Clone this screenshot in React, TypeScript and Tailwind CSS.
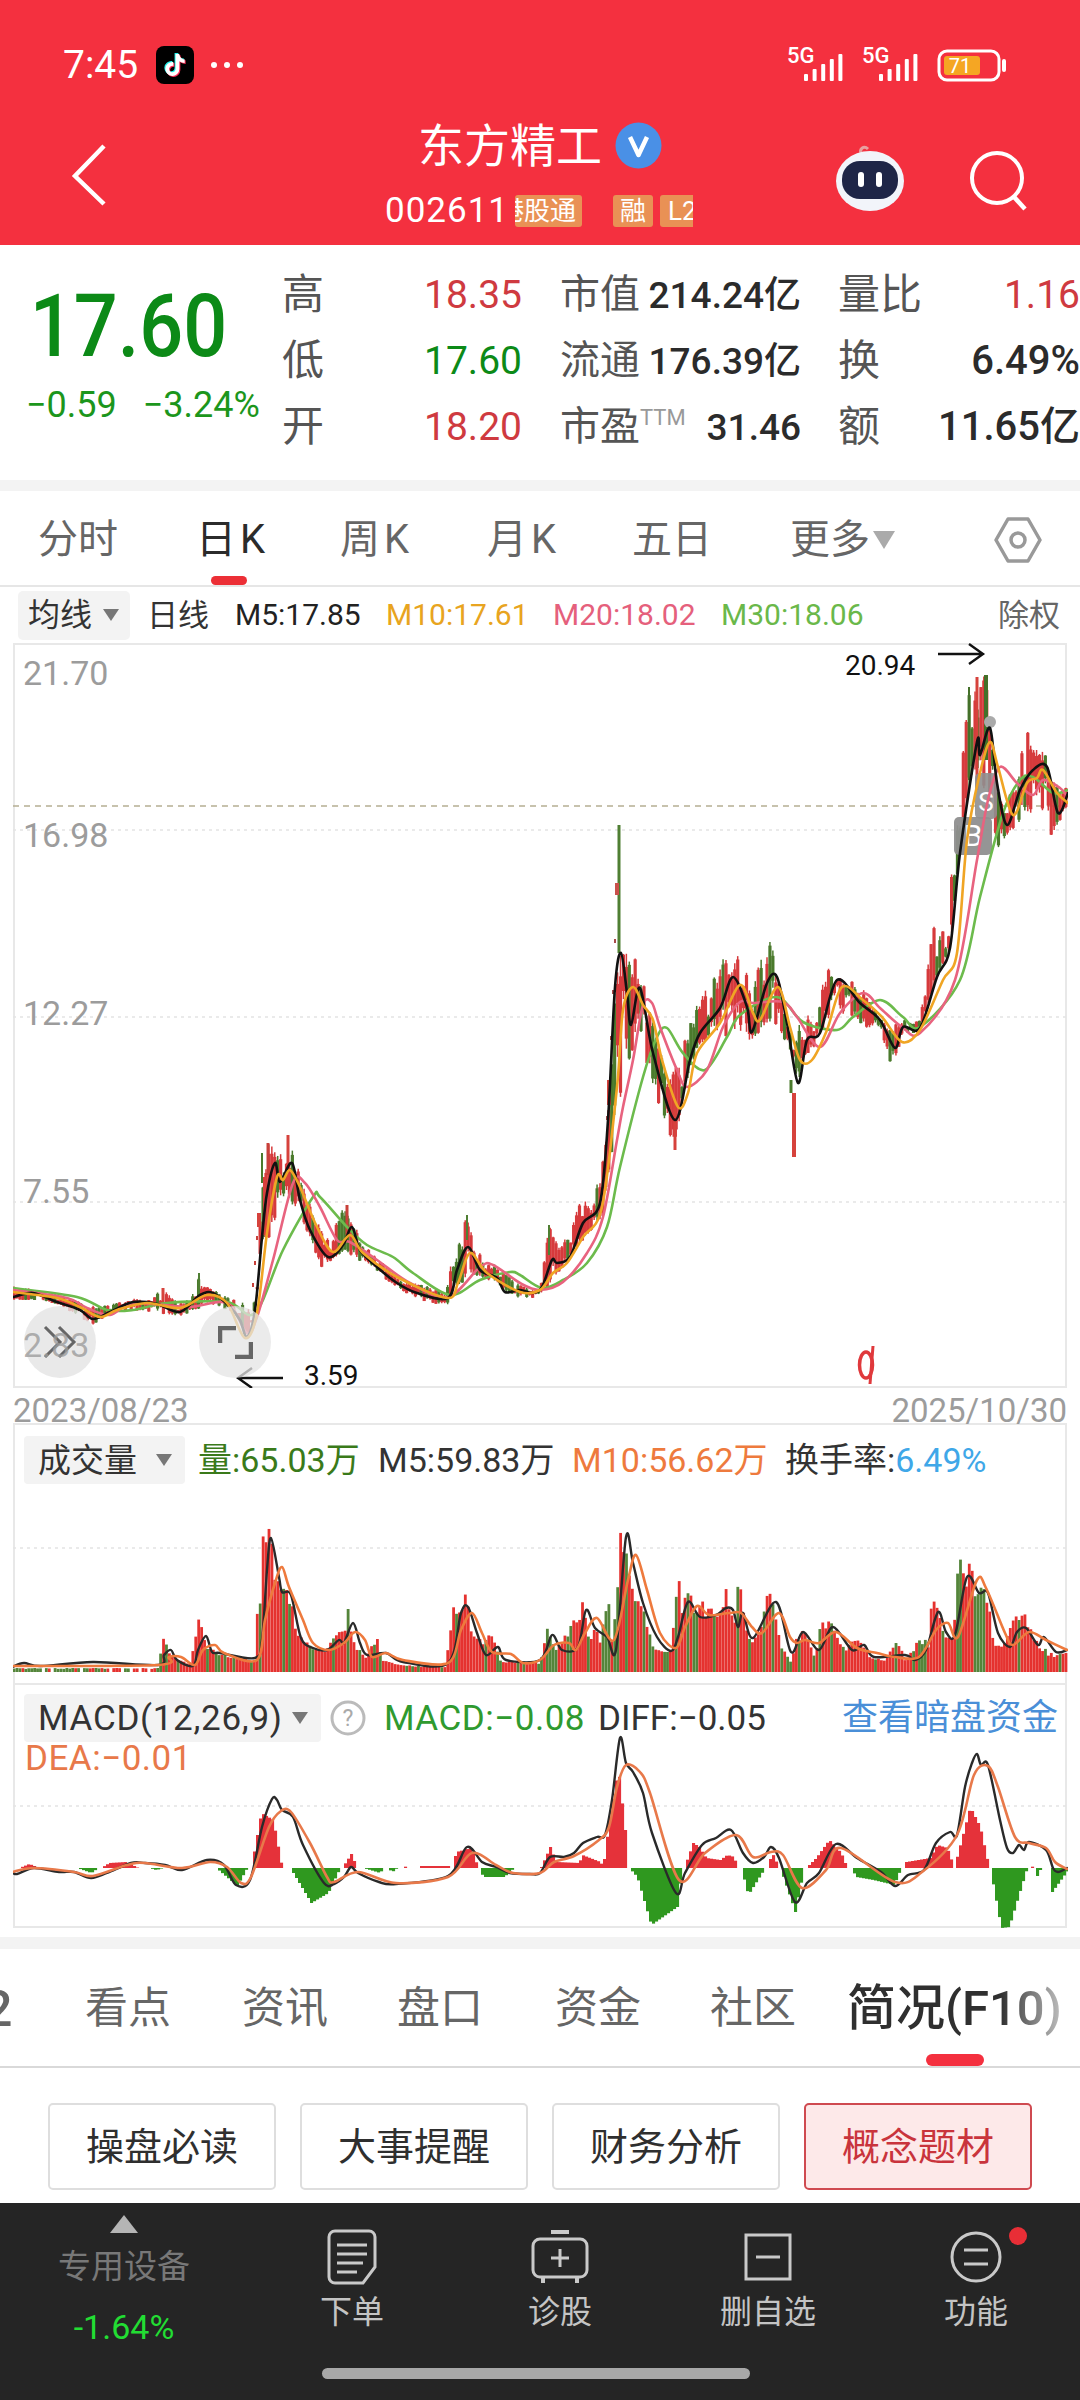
import React from "react";
import { FaTiktok } from "react-icons/fa";

type P = [number, number];
const sortP = (p: P[]) => [...p].sort((a, b) => a[0] - b[0]);
const at = (pts: P[], x: number) => {
  if (x <= pts[0][0]) return pts[0][1];
  for (let i = 1; i < pts.length; i++) {
    if (x <= pts[i][0]) {
      const [x0, y0] = pts[i - 1];
      const [x1, y1] = pts[i];
      return x1 === x0 ? y1 : y0 + ((y1 - y0) * (x - x0)) / (x1 - x0);
    }
  }
  return pts[pts.length - 1][1];
};
const smooth = (p: P[]) => {
  let d = `M${p[0][0]} ${p[0][1]}`;
  for (let i = 0; i < p.length - 1; i++) {
    const a = p[Math.max(0, i - 1)], b = p[i], c = p[i + 1], e = p[Math.min(p.length - 1, i + 2)];
    const k = 0.16;
    d += ` C${(b[0] + (c[0] - a[0]) * k).toFixed(1)} ${(b[1] + (c[1] - a[1]) * k).toFixed(1)} ${(c[0] - (e[0] - b[0]) * k).toFixed(1)} ${(c[1] - (e[1] - b[1]) * k).toFixed(1)} ${c[0]} ${c[1]}`;
  }
  return d;
};
const rnd = (i: number) => {
  const v = Math.sin(i * 12.9898 + 4.1) * 43758.5453;
  return v - Math.floor(v);
};

const M5: P[] = [[13,1297],[33,1293],[57,1302],[80,1310],[93,1319],[110,1312],[133,1302],[157,1304],[180,1312],[200,1295],[213,1293],[230,1307],[240,1320],[247,1337],[255,1310],[262,1237],[267,1193],[275,1163],[280,1182],[292,1163],[300,1200],[310,1230],[328,1257],[343,1245],[352,1227],[360,1250],[377,1267],[397,1283],[417,1293],[448,1298],[457,1270],[468,1247],[480,1270],[497,1278],[505,1292],[520,1290],[533,1293],[542,1287],[552,1260],[557,1263],[570,1257],[583,1223],[600,1203],[608,1120],[615,987],[621,953],[627,993],[631,1025],[640,988],[653,1053],[675,1120],[690,1060],[700,1033],[720,1008],[733,977],[747,1007],[752,1032],[767,983],[777,977],[787,1023],[798,1083],[807,1040],[820,1033],[837,980],[860,1003],[880,1020],[895,1048],[903,1027],[920,1028],[937,977],[950,948],[960,853],[977,742],[980,755],[990,728],[997,783],[1007,825],[1020,790],[1033,770],[1047,767],[1058,813],[1068,793]];
const M10: P[] = [[13,1292],[57,1298],[80,1307],[100,1317],[117,1310],[147,1303],[180,1308],[207,1295],[227,1303],[245,1338],[257,1313],[267,1233],[277,1177],[283,1180],[290,1170],[300,1187],[317,1227],[333,1252],[350,1235],[363,1253],[397,1277],[447,1298],[458,1283],[470,1253],[487,1273],[520,1292],[540,1290],[553,1273],[567,1263],[583,1237],[602,1207],[617,1087],[623,1010],[633,987],[643,1005],[653,1020],[662,1060],[678,1107],[688,1093],[697,1053],[720,1023],[740,985],[753,1013],[760,1020],[778,987],[790,1027],[800,1060],[812,1060],[827,1030],[842,987],[863,1000],[882,1017],[902,1042],[920,1030],[943,980],[957,953],[967,840],[980,773],[990,742],[998,767],[1013,815],[1027,783],[1037,778],[1043,770],[1057,793],[1068,803]];
const M20: P[] = [[13,1290],[67,1298],[87,1308],[110,1315],[133,1303],[187,1307],[227,1303],[247,1333],[257,1317],[273,1260],[293,1183],[305,1183],[320,1207],[337,1240],[350,1242],[377,1260],[410,1283],[448,1297],[480,1267],[493,1265],[520,1283],[540,1290],[563,1282],[587,1253],[603,1217],[617,1140],[623,1107],[633,1060],[643,1005],[652,1003],[660,1027],[677,1070],[687,1087],[707,1070],[723,1027],[740,1002],[753,1003],[783,1002],[797,1017],[820,1047],[840,1013],[863,993],[880,1008],[902,1027],[920,1033],[955,980],[977,860],[988,800],[1000,767],[1017,783],[1033,795],[1043,780],[1060,788],[1068,797]];
const M30: P[] = [[13,1288],[77,1297],[107,1310],[133,1310],[167,1303],[227,1302],[255,1313],[283,1250],[313,1197],[320,1197],[347,1227],[367,1245],[393,1257],[413,1273],[450,1295],[480,1280],[510,1272],[520,1275],[542,1288],[563,1280],[587,1263],[607,1227],[620,1167],[643,1077],[657,1037],[667,1028],[683,1053],[705,1070],[727,1037],[740,1015],[777,997],[803,1022],[837,1030],[853,1017],[880,1000],[903,1017],[920,1027],[960,980],[980,897],[1003,813],[1020,780],[1033,777],[1053,793],[1068,790]];
const HI: P[] = sortP([[13,1285],[60,1295],[90,1305],[110,1305],[125,1298],[150,1300],[162,1288],[175,1300],[190,1300],[199,1273],[210,1288],[230,1298],[250,1305],[258,1290],[262,1153],[268,1143],[275,1142],[283,1155],[288,1135],[295,1160],[310,1200],[325,1240],[345,1205],[352,1220],[365,1245],[400,1280],[445,1290],[452,1260],[467,1215],[475,1245],[500,1270],[530,1290],[540,1290],[549,1225],[560,1250],[582,1198],[595,1193],[605,1150],[612,1080],[621,953],[633,953],[641,973],[655,1030],[668,1080],[680,1060],[690,1017],[702,997],[727,950],[738,945],[752,990],[769,928],[775,960],[787,1027],[796,1040],[803,1007],[815,1027],[826,963],[837,977],[860,983],[887,1027],[898,1020],[920,1020],[935,917],[947,923],[960,777],[969,687],[977,677],[986,675],[993,767],[1002,823],[1017,738],[1027,730],[1038,747],[1043,743],[1052,783],[1067,777]]);
const LO: P[] = sortP([[13,1300],[40,1300],[60,1305],[80,1318],[93,1325],[105,1317],[125,1310],[150,1312],[180,1317],[195,1310],[215,1305],[232,1312],[250,1320],[262,1240],[270,1238],[280,1205],[290,1205],[300,1215],[310,1240],[322,1268],[335,1258],[345,1250],[355,1260],[365,1262],[385,1280],[400,1290],[420,1300],[447,1307],[455,1290],[470,1275],[480,1278],[500,1285],[520,1300],[540,1297],[553,1280],[580,1243],[603,1220],[612,1150],[625,1073],[640,1027],[650,1080],[675,1150],[687,1087],[697,1047],[720,1030],[745,1057],[755,1037],[773,1020],[788,1047],[800,1060],[815,1047],[827,1020],[853,1017],[875,1035],[893,1067],[903,1033],[920,1033],[932,980],[958,867],[970,773],[985,790],[1000,855],[1008,835],[1025,818],[1042,810],[1053,840],[1057,827],[1067,807]]);
const EXTRA: [number, number, number, string, number][] = [
  [253,1283,1287,"#c8403a",2],[255,1261,1265,"#c8403a",2],[257,1236,1240,"#c8403a",2],[259,1213,1227,"#d6423c",4],[265,1177,1235,"#d8403c",4],[262,1153,1183,"#4a7a2c",2],
  [619,825,953,"#4f7f33",3],[617,883,895,"#c9504a",4],[615,939,943,"#a84a4a",2],[613,990,994,"#a84a4a",2],[611,1036,1040,"#a84a4a",2],[609,1080,1105,"#d6423c",4],[607,1116,1120,"#a84a4a",2],
  [794,1093,1157,"#d6423c",4],[791,1080,1093,"#4a7a2c",3],[549,1225,1255,"#4f7f33",2],[467,1215,1240,"#4f7f33",2],[199,1273,1295,"#4f7f33",2],[163,1288,1305,"#d6423c",3],[288,1135,1180,"#d6423c",3],[268,1143,1175,"#c8403a",3],[347,1205,1235,"#c8403a",3],[675,1100,1150,"#d6423c",3],[986,675,760,"#44702a",4],[977,677,790,"#d6423c",3],[969,687,780,"#44702a",2],
];

const VT: P[] = sortP([[13,1668],[160,1668],[161,1637],[165,1640],[170,1655],[190,1664],[197,1630],[199,1612],[201,1625],[206,1645],[225,1655],[255,1660],[258,1585],[261,1590],[263,1522],[267,1528],[271,1530],[275,1570],[281,1590],[290,1585],[296,1632],[310,1645],[325,1652],[332,1640],[345,1625],[347,1598],[352,1640],[365,1655],[378,1637],[382,1660],[400,1665],[445,1667],[450,1635],[455,1592],[460,1615],[467,1583],[470,1630],[478,1640],[492,1633],[500,1660],[540,1662],[549,1620],[552,1640],[556,1650],[578,1613],[582,1600],[590,1640],[595,1625],[600,1640],[609,1590],[612,1640],[617,1600],[619,1500],[621,1518],[628,1563],[633,1578],[638,1600],[643,1603],[650,1633],[657,1650],[671,1650],[678,1570],[681,1600],[689,1580],[695,1620],[701,1593],[706,1620],[711,1595],[716,1620],[719,1603],[726,1588],[729,1600],[734,1620],[739,1573],[743,1610],[750,1640],[760,1633],[769,1585],[774,1593],[781,1643],[791,1660],[797,1633],[805,1630],[815,1657],[821,1620],[833,1622],[843,1647],[858,1637],[871,1657],[884,1660],[898,1640],[905,1660],[920,1637],[929,1642],[931,1607],[935,1585],[943,1627],[953,1640],[958,1553],[961,1550],[965,1590],[969,1563],[977,1580],[984,1573],[989,1607],[995,1643],[1003,1647],[1017,1610],[1020,1617],[1027,1612],[1032,1633],[1039,1643],[1050,1653],[1067,1652]]);
const VK: P[] = [[12,1667],[24,1663],[41,1666],[93,1662],[158,1665],[164,1655],[171,1650],[177,1660],[193,1666],[198,1650],[206,1636],[212,1652],[220,1653],[255,1658],[262,1640],[267,1570],[271,1538],[279,1577],[282,1592],[291,1595],[301,1638],[313,1648],[327,1650],[339,1640],[344,1643],[353,1623],[360,1643],[367,1655],[386,1653],[403,1662],[448,1663],[461,1613],[468,1607],[477,1633],[486,1655],[498,1647],[506,1660],[540,1660],[552,1635],[562,1650],[578,1647],[586,1610],[595,1628],[607,1637],[616,1650],[626,1537],[633,1563],[643,1603],[657,1637],[671,1651],[678,1637],[688,1602],[700,1617],[716,1615],[726,1608],[733,1610],[738,1627],[743,1613],[753,1638],[776,1602],[791,1652],[803,1632],[819,1650],[833,1627],[852,1650],[864,1645],[874,1657],[905,1655],[915,1660],[926,1650],[938,1612],[946,1632],[955,1635],[967,1577],[979,1593],[988,1593],[998,1633],[1010,1647],[1017,1632],[1026,1628],[1038,1645],[1044,1637],[1056,1652],[1067,1650]];
const VO: P[] = [[12,1666],[158,1665],[169,1657],[181,1657],[195,1665],[203,1650],[215,1645],[224,1653],[257,1660],[265,1620],[275,1583],[282,1567],[289,1587],[303,1620],[313,1643],[329,1650],[344,1643],[355,1632],[365,1640],[372,1657],[386,1653],[403,1660],[448,1663],[461,1630],[472,1613],[482,1633],[492,1652],[511,1654],[523,1663],[540,1660],[554,1645],[569,1643],[576,1650],[585,1633],[597,1618],[614,1640],[628,1580],[636,1555],[647,1590],[660,1633],[676,1648],[685,1627],[697,1606],[709,1615],[729,1613],[741,1613],[752,1627],[762,1633],[779,1613],[790,1637],[797,1643],[805,1640],[819,1643],[836,1632],[857,1648],[877,1653],[895,1657],[919,1657],[936,1630],[948,1623],[958,1637],[977,1580],[986,1588],[1005,1633],[1013,1645],[1029,1632],[1046,1640],[1067,1650]];

const DIFF: P[] = [[12,1872],[17,1874],[34,1868],[59,1872],[74,1872],[91,1878],[107,1873],[131,1863],[145,1863],[165,1865],[182,1870],[207,1860],[224,1865],[236,1885],[250,1880],[262,1827],[272,1799],[277,1800],[282,1810],[293,1817],[303,1845],[324,1883],[334,1884],[344,1877],[351,1867],[358,1873],[379,1882],[396,1884],[448,1876],[467,1847],[482,1862],[496,1867],[510,1873],[530,1874],[540,1873],[550,1857],[564,1857],[574,1853],[583,1843],[597,1837],[605,1835],[612,1800],[620,1738],[626,1763],[633,1772],[643,1793],[652,1833],[676,1893],[685,1873],[702,1845],[716,1838],[731,1830],[743,1853],[753,1863],[764,1857],[771,1847],[779,1858],[795,1902],[807,1883],[819,1873],[836,1844],[857,1858],[881,1872],[895,1886],[908,1875],[924,1870],[936,1843],[950,1832],[957,1835],[965,1787],[972,1763],[977,1754],[981,1765],[988,1765],[1000,1820],[1007,1848],[1013,1853],[1019,1845],[1024,1850],[1029,1842],[1046,1850],[1053,1868],[1058,1872],[1067,1868]];
const DEA: P[] = [[12,1872],[34,1868],[74,1872],[93,1876],[127,1865],[145,1863],[182,1868],[210,1862],[227,1867],[241,1883],[251,1877],[269,1827],[281,1811],[291,1812],[310,1843],[327,1877],[334,1882],[358,1872],[396,1883],[448,1877],[472,1853],[496,1865],[513,1873],[540,1873],[554,1862],[574,1856],[599,1840],[609,1827],[617,1787],[626,1765],[640,1772],[650,1793],[679,1880],[705,1853],[736,1835],[753,1857],[771,1852],[783,1855],[802,1888],[826,1870],[841,1848],[895,1882],[922,1872],[957,1835],[974,1775],[988,1766],[998,1787],[1015,1837],[1029,1843],[1046,1848],[1055,1862],[1067,1869]];
const Z = 1868;
const HIST: P[][] = [
  [[18,Z],[28,1864],[38,Z]],[[76,Z],[90,1873],[97,Z]],[[100,Z],[108,1863],[125,1862],[137,Z]],[[148,Z],[155,1870],[162,Z]],[[172,Z],[177,1871],[182,Z]],[[215,Z],[236,1886],[246,Z]],
  [[250,Z],[260,1813],[272,1820],[281,Z]],[[289,Z],[310,1903],[327,1893],[339,Z]],[[341,Z],[350,1854],[356,Z]],[[362,Z],[379,1873],[382,Z]],[[386,Z],[391,1872],[396,Z]],[[401,Z],[403,1866],[406,Z]],[[420,1866],[448,1866]],
  [[451,Z],[455,1852],[470,1848],[477,Z]],[[478,Z],[482,1877],[503,1877],[513,Z]],[[540,1867],[549,1847],[555,1862],[578,1863],[581,1855],[599,1862],[602,1867],[605,1843],[617,1768],[624,1830],[627,Z]],
  [[628,Z],[636,1877],[650,1925],[676,1907],[681,Z]],[[683,Z],[692,1843],[698,1847],[705,1858],[719,1860],[726,1855],[733,1857],[736,Z]],[[740,Z],[747,1895],[764,Z]],[[766,Z],[771,1853],[778,Z]],[[779,Z],[794,1912],[803,Z]],
  [[805,Z],[815,1858],[828,1840],[840,1853],[846,Z]],[[850,Z],[855,1877],[872,1880],[893,1885],[900,Z]],[[902,Z],[905,1862],[929,1858],[936,1845],[946,1848],[953,Z],[957,1853],[969,1807],[979,1827],[988,Z]],
  [[989,Z],[1000,1928],[1008,1927],[1026,Z]],[[1028,Z],[1029,1864],[1032,Z]],[[1033,Z],[1036,1876],[1040,Z]],[[1048,Z],[1051,1892],[1067,1870]],
];

const Candles = () => {
  const out: React.ReactNode[] = [];
  let i = 0;
  for (let x = 14; x < 1067; x += 2.93) {
    i++;
    const c = at(M5, x);
    const h = at(HI, x);
    const l = at(LO, x);
    const r1 = rnd(i), r2 = rnd(i + 500), r3 = rnd(i + 900), r4 = rnd(i + 1300);
    const top = Math.min(h + (c - h) * r1 * r1 * 0.9, c);
    const bot = Math.max(l + (c - l) * r2 * r2 * 0.9, c);
    const col = r3 < 0.68 ? "#d63a3c" : "#4a7a2c";
    const bt = top + (bot - top) * 0.15 * r4;
    const bb = bot - (bot - top) * 0.2 * r2;
    out.push(<line key={"w" + i} x1={x} x2={x} y1={top} y2={bot} stroke={col} strokeWidth={1.5} />);
    out.push(<rect key={"b" + i} x={x - 1.6} y={bt} width={3.2} height={Math.max(2, bb - bt)} fill={col} />);
  }
  EXTRA.forEach((e, k) => out.push(<line key={"e" + k} x1={e[0]} x2={e[0]} y1={e[1]} y2={e[2]} stroke={e[3]} strokeWidth={e[4]} />));
  return <>{out}</>;
};

const VolBars = () => {
  const out: React.ReactNode[] = [];
  let i = 0;
  for (let x = 14; x < 1068; x += 2.93) {
    i++;
    const env = at(VT, x);
    const sp = 1672 - env;
    const r = rnd(i + 77);
    const top = env + sp * r * r * 0.22;
    const green = x < 90 ? rnd(i + 3) < 0.8 : rnd(i + 3) < 0.27;
    if (x < 160 && rnd(i + 9) < 0.2) continue;
    out.push(<rect key={i} x={x - 1.3} y={top} width={2.8} height={1672 - top} fill={green ? "#54853a" : "#e5322f"} />);
  }
  return <>{out}</>;
};

const HistBars = () => {
  const out: React.ReactNode[] = [];
  HIST.forEach((seg, s) => {
    for (let x = seg[0][0]; x <= seg[seg.length - 1][0]; x += 3) {
      const y = at(seg, x);
      if (Math.abs(y - Z) < 0.5) continue;
      out.push(
        <rect key={s + "-" + x} x={x} y={Math.min(y, Z)} width={3.1} height={Math.abs(y - Z)} fill={y < Z ? "#e5323a" : "#2f981f"} />
      );
    }
  });
  return <>{out}</>;
};

const Line = ({ p, c, w = 2.6 }: { p: P[]; c: string; w?: number }) => (
  <path d={smooth(p)} fill="none" stroke={c} strokeWidth={w} strokeLinejoin="round" strokeLinecap="round" />
);
const Grid = ({ y }: { y: number }) => (
  <line x1={13} x2={1068} y1={y} y2={y} stroke="#e3e3e3" strokeWidth={1.5} strokeDasharray="3 4" />
);

const Signal = ({ x }: { x: number }) => (
  <g fill="#fff">
    <text x={x} y={63} fontSize={22} fontWeight={500} fontFamily="Roboto" fill="#fff">5G</text>
    {[0, 1, 2, 3, 4].map((i) => (
      <rect key={i} x={x + 17 + i * 8.6} y={74 - i * 5} width={4} height={7 + i * 5} rx={1} />
    ))}
  </g>
);

const Caret = ({ c = "#777" }: { c?: string }) => (
  <svg width="18" height="14" viewBox="0 0 18 14" className="shrink-0"><path d="M1 1h16l-8 12z" fill={c} /></svg>
);

const StatRow = ({ l1, v1, c1, l2, v2, l3, v3, c3 }: { l1: string; v1: string; c1: string; l2: React.ReactNode; v2: string; l3: string; v3: string; c3: string }) => (
  <div className="flex h-[66px] items-center whitespace-nowrap">
    <span className="w-[60px] text-[42px] leading-none text-[#555]">{l1}</span>
    <span className={`w-[180px] text-right text-[39px] leading-none ${c1}`}>{v1}</span>
    <span className="ml-[38px] flex w-[80px] items-start text-[40px] leading-none text-[#555]">{l2}</span>
    <span className="w-[161px] text-right text-[37px] font-medium leading-none text-[#2b2b2b]">{v2}</span>
    <span className="ml-[37px] w-[90px] text-[42px] leading-none text-[#555]">{l3}</span>
    <span className={`w-[152px] text-right leading-none ${c3}`}>{v3}</span>
  </div>
);

const Chip = ({ w, children }: { w: string; children: React.ReactNode }) => (
  <div className={`flex h-[48px] shrink-0 items-center justify-between rounded-[4px] bg-[#f3f3f3] pl-[14px] pr-[12px] text-[33px] leading-none text-[#333] ${w}`}>{children}</div>
);

const FootItem = ({ label, icon }: { label: string; icon: React.ReactNode }) => (
  <div className="flex w-[208px] flex-col items-center pt-[25px]">
    <div className="flex h-[58px] items-center justify-center">{icon}</div>
    <div className="mt-[10px] text-[32px] leading-none text-[#c4c4c4]">{label}</div>
  </div>
);

const Btn = ({ t, a }: { t: string; a?: boolean }) => (
  <div className={`flex h-[87px] w-[228px] items-center justify-center rounded-[5px] border-2 text-[38px] leading-none ${a ? "border-[#cf4a50] bg-[#fde9e9] text-[#c9343c]" : "border-[#dedede] bg-white text-[#2f2f2f]"}`}>{t}</div>
);

export default function App() {
  return (
    <div className="flex h-[2400px] w-[1080px] flex-col overflow-hidden bg-white font-['Roboto','Noto_Sans_CJK_SC',sans-serif]">
      {/* Header */}
      <div className="relative h-[245px] shrink-0 bg-[#f4303f] text-white">
        <div className="flex h-[92px] items-center pl-[63px] pt-[38px]">
          <span className="text-[39px] leading-none">7:45</span>
          <div className="relative ml-[18px] flex h-[38px] w-[38px] items-center justify-center rounded-[8px] bg-black">
            <FaTiktok className="absolute ml-[-2px] mt-[-2px] text-[22px] text-[#25f4ee]" />
            <FaTiktok className="absolute ml-[2px] mt-[2px] text-[22px] text-[#fe2c55]" />
            <FaTiktok className="absolute text-[22px] text-white" />
          </div>
          <svg width="34" height="10" viewBox="0 0 34 10" className="ml-[16px]"><circle cx="4" cy="5" r="3" fill="#fff" /><circle cx="17" cy="5" r="3" fill="#fff" /><circle cx="30" cy="5" r="3" fill="#fff" /></svg>
          <svg width="240" height="50" viewBox="780 40 240 50" className="ml-auto mr-[60px]">
            <Signal x={787} />
            <Signal x={862} />
            <rect x="939" y="51" width="60" height="29" rx="8" fill="none" stroke="#fff" strokeWidth="3" />
            <rect x="944" y="56" width="36" height="19" rx="3" fill="#f5a623" />
            <rect x="1002" y="59" width="4" height="13" rx="2" fill="#fff" />
            <text x="960" y="73" fontSize="20" fontFamily="Roboto" textAnchor="middle" fill="#fff">71</text>
          </svg>
        </div>
        <div className="flex h-[63px] items-center justify-center pt-[44px]">
          <span className="text-[46px] leading-none">东方精工</span>
          <svg width="47" height="47" viewBox="0 0 47 47" className="ml-[13px]"><circle cx="23.5" cy="23.5" r="23" fill="#4a90e6" /><path d="M15 15l8.5 18L32 15" fill="none" stroke="#fff" strokeWidth="4.5" strokeLinejoin="round" /></svg>
        </div>
        <div className="absolute left-[385px] top-[195px] flex items-center">
          <span className="text-[35px] leading-[32px] tracking-[1px]">002611</span>
          <div className="ml-[6px] flex h-[32px] w-[67px] items-center justify-end overflow-hidden rounded-[3px] bg-[#e99155] pr-[6px] text-[26px] leading-none whitespace-nowrap">港股通</div>
          <div className="ml-[31px] flex h-[32px] w-[40px] items-center justify-center rounded-[3px] bg-[#e99155] text-[26px] leading-none">融</div>
          <div className="ml-[7px] flex h-[32px] w-[33px] items-center overflow-hidden rounded-l-[3px] bg-[#e99155] pl-[8px] text-[26px] leading-none">L2</div>
        </div>
        <svg width="40" height="64" viewBox="0 0 40 64" className="absolute left-[70px] top-[143px]"><path d="M34 3L5 33l29 28" fill="none" stroke="#fff" strokeWidth="4.5" /></svg>
        <svg width="76" height="70" viewBox="0 0 76 70" className="absolute left-[832px] top-[143px]">
          <path d="M30 12c-4-6 2-10 6-6" fill="none" stroke="#e8a0a0" strokeWidth="3" />
          <ellipse cx="38" cy="38" rx="34" ry="30" fill="#f2f4fa" />
          <rect x="10" y="18" width="56" height="38" rx="18" fill="#1e2547" />
          <rect x="26" y="29" width="6" height="15" rx="3" fill="#fff" />
          <rect x="44" y="29" width="6" height="15" rx="3" fill="#fff" />
        </svg>
        <svg width="62" height="62" viewBox="0 0 62 62" className="absolute left-[969px] top-[150px]"><circle cx="28" cy="28" r="25" fill="none" stroke="#fff" strokeWidth="4" /><path d="M45 47l11 12" stroke="#fff" strokeWidth="4.5" /></svg>
      </div>

      {/* Stats */}
      <div className="flex h-[235px] shrink-0 items-start overflow-hidden">
        <div className="w-[282px] shrink-0 pl-[27px] pt-[37px]">
          <div className="origin-left scale-x-[0.89] pl-[3px] text-[87px] font-medium leading-[88px] text-[#0c8a17]">17.60</div>
          <div className="ml-[-1px] mt-[17px] flex gap-[26px] whitespace-nowrap text-[36px] leading-none text-[#1c961c]"><span>−0.59</span><span>−3.24%</span></div>
        </div>
        <div className="pt-[17px]">
          <StatRow l1="高" v1="18.35" c1="text-[#cf3a40]" l2="市值" v2="214.24亿" l3="量比" v3="1.16" c3="text-[39px] text-[#cf3a40]" />
          <StatRow l1="低" v1="17.60" c1="text-[#0c8a17]" l2="流通" v2="176.39亿" l3="换" v3="6.49%" c3="text-[40px] font-medium text-[#2b2b2b]" />
          <StatRow l1="开" v1="18.20" c1="text-[#cf3a40]" l2={<span className="flex items-start">市盈<span className="text-[22px] text-[#999]">TTM</span></span>} v2="31.46" l3="额" v3="11.65亿" c3="text-[40px] font-medium text-[#2b2b2b]" />
        </div>
      </div>
      <div className="h-[11px] shrink-0 bg-[#f3f3f3]" />

      {/* Period tabs */}
      <div className="flex h-[96px] shrink-0 items-center whitespace-nowrap border-b-2 border-[#e6e6e6] pt-[4px] text-[40px] leading-none text-[#666]">
        <span className="ml-[38px] w-[80px]">分时</span>
        <span className="relative ml-[78px] w-[71px] tracking-[4px] text-[#2b2b2b]">日K<span className="absolute left-[15px] top-[56px] h-[9px] w-[36px] rounded-full bg-[#ec2f36]" /></span>
        <span className="ml-[73px] w-[74px] tracking-[4px]">周K</span>
        <span className="ml-[73px] w-[73px] tracking-[4px]">月K</span>
        <span className="ml-[72px] w-[78px]">五日</span>
        <span className="ml-[80px] w-[82px]">更多</span>
        <svg width="24" height="20" viewBox="0 0 24 20"><path d="M1 1h22l-11 18z" fill="#aaa" /></svg>
        <svg width="48" height="46" viewBox="0 0 48 46" className="ml-[98px]"><path d="M14 2h20l12 21-12 21H14L2 23z" fill="none" stroke="#999" strokeWidth="3.5" strokeLinejoin="round" /><circle cx="24" cy="23" r="7" fill="none" stroke="#999" strokeWidth="3.5" /></svg>
      </div>

      {/* MA row */}
      <div className="flex h-[56px] shrink-0 items-center whitespace-nowrap text-[30px] leading-none">
        <div className="ml-[18px] flex h-[49px] w-[112px] items-center justify-between rounded-[5px] bg-[#f3f3f3] pl-[10px] pr-[10px] text-[32px] text-[#333]">均线<Caret /></div>
        <span className="ml-[17px] w-[88px] text-[31px] text-[#333]">日线</span>
        <span className="w-[151px] text-[#222]">M5:17.85</span>
        <span className="w-[167px] text-[#e8a420]">M10:17.61</span>
        <span className="w-[168px] text-[#e5607c]">M20:18.02</span>
        <span className="w-[277px] text-[#6ab84a]">M30:18.06</span>
        <span className="text-[31px] text-[#666]">除权</span>
      </div>

      {/* Main chart */}
      <div className="relative mx-[13px] h-[745px] shrink-0 border-2 border-[#e8e8e8]">
        <svg width="1055" height="745" viewBox="13 643 1055 745" className="absolute left-[-2px] top-[-2px]">
          <Grid y={830} />
          <Grid y={1017} />
          <Grid y={1202} />
          <line x1={13} x2={1068} y1={806} y2={806} stroke="#b5ae92" strokeWidth={1.6} strokeDasharray="6 5" />
          <Candles />
          <circle cx={990} cy={722} r={6} fill="#aaa" />
          <rect x={975} y={773} width={22} height={46} rx={5} fill="#8f8f8f" opacity={0.9} />
          <text x={986} y={811} fontSize={26} fill="#fff" textAnchor="middle" fontFamily="Roboto">S</text>
          <rect x={954} y={817} width={38} height={38} rx={5} fill="#8f8f8f" opacity={0.95} />
          <text x={973} y={846} fontSize={30} fill="#fff" textAnchor="middle" fontFamily="Roboto">B</text>
          <Line p={M30} c="#6cbb4c" />
          <Line p={M20} c="#e8637f" />
          <Line p={M5} c="#111111" />
          <Line p={M10} c="#f0a524" />
          <path d="M938 654h44m-13-10l14 10-14 10" fill="none" stroke="#111" strokeWidth="2.4" />
          <path d="M283 1378h-44m13-10l-14 10 14 10" fill="none" stroke="#111" strokeWidth="2.4" />
          <path d="M873 1346l-3 38" stroke="#e0393c" strokeWidth="3" />
          <ellipse cx="866" cy="1365" rx="6.5" ry="13" fill="none" stroke="#e0393c" strokeWidth="3.5" />
        </svg>
        <span className="absolute left-[8px] top-[10px] text-[34px] leading-[36px] text-[#9c9c9c]">21.70</span>
        <span className="absolute left-[8px] top-[172px] text-[34px] leading-[36px] text-[#9c9c9c]">16.98</span>
        <span className="absolute left-[8px] top-[350px] text-[34px] leading-[36px] text-[#9c9c9c]">12.27</span>
        <span className="absolute left-[8px] top-[528px] text-[34px] leading-[36px] text-[#9c9c9c]">7.55</span>
        <div className="absolute left-[9px] top-[661px] flex h-[72px] w-[72px] items-center justify-center rounded-full bg-[#e4e4e4]/80">
          <svg width="36" height="36" viewBox="0 0 36 36"><path d="M3 3l15 15L3 33M17 3l15 15-15 15" fill="none" stroke="#666" strokeWidth="3" /></svg>
        </div>
        <span className="absolute left-[8px] top-[682px] text-[34px] leading-[36px] text-[#9c9c9c]/80">2.83</span>
        <span className="absolute left-[830px] top-[6px] text-[28px] leading-[30px] text-[#111]">20.94</span>
        <span className="absolute left-[289px] top-[716px] text-[28px] leading-[30px] text-[#111]">3.59</span>
        <div className="absolute left-[184px] top-[661px] flex h-[72px] w-[72px] items-center justify-center rounded-full bg-[#e4e4e4]/75">
          <svg width="35" height="33" viewBox="0 0 35 33"><path d="M2 17V2h16M33 16v15H17" fill="none" stroke="#666" strokeWidth="4.5" /></svg>
        </div>
      </div>

      {/* Dates */}
      <div className="mx-[13px] flex h-[37px] shrink-0 items-center justify-between border-b-2 border-[#e8e8e8] pt-[10px] text-[33px] leading-none text-[#9c9c9c]">
        <span>2023/08/23</span>
        <span>2025/10/30</span>
      </div>

      {/* Volume */}
      <div className="relative mx-[13px] h-[258px] shrink-0 border-x-2 border-[#e8e8e8]">
        <svg width="1055" height="258" viewBox="13 1425 1055 258" className="absolute left-[-2px] top-0">
          <Grid y={1548} />
          <VolBars />
          <Line p={VK} c="#2a2a2a" w={2.4} />
          <Line p={VO} c="#ee7a3d" w={2.6} />
        </svg>
        <div className="relative flex items-center whitespace-nowrap pl-[9px] pt-[11px] text-[34px] leading-none">
          <Chip w="w-[161px]">成交量<Caret /></Chip>
          <span className="ml-[13px] w-[180px] text-[#3a7a1a]">量:65.03万</span>
          <span className="w-[194px] text-[#333]">M5:59.83万</span>
          <span className="w-[213px] text-[#ee7a3d]">M10:56.62万</span>
          <span className="text-[#333]">换手率:<span className="text-[#3fa7e8]">6.49%</span></span>
        </div>
      </div>

      {/* MACD */}
      <div className="relative mx-[13px] h-[245px] shrink-0 border-2 border-[#e8e8e8]">
        <svg width="1055" height="245" viewBox="13 1683 1055 245" className="absolute left-[-2px] top-[-2px]">
          <Grid y={1806} />
          <HistBars />
          <Line p={DIFF} c="#2a2a2a" w={2.4} />
          <Line p={DEA} c="#e8794a" w={2.6} />
        </svg>
        <div className="relative flex items-center whitespace-nowrap pl-[9px] pt-[9px] text-[35px] leading-none">
          <Chip w="w-[297px]"><span className="text-[35px] tracking-[0.7px]">MACD(12,26,9)</span><Caret /></Chip>
          <svg width="36" height="36" viewBox="0 0 36 36" className="ml-[9px]"><circle cx="18" cy="18" r="16" fill="none" stroke="#bbb" strokeWidth="3" /><text x="18" y="26" fontSize="23" textAnchor="middle" fill="#aaa" fontFamily="Roboto">?</text></svg>
          <span className="ml-[18px] w-[214px] tracking-[0.5px] text-[#2f9a2f]">MACD:−0.08</span>
          <span className="w-[244px] text-[#333]">DIFF:−0.05</span>
          <span className="text-[36px] text-[#4a8fd8]">查看暗盘资金</span>
        </div>
        <div className="relative pl-[10px] text-[35px] leading-[34px] tracking-[0.5px] text-[#e8794a]">DEA:−0.01</div>
      </div>

      <div className="mt-[9px] h-[12px] shrink-0 bg-[#f3f3f3]" />

      {/* Info tabs */}
      <div className="relative flex h-[119px] shrink-0 items-center overflow-hidden whitespace-nowrap border-b-2 border-[#d9d9d9] pt-[2px] text-[43px] leading-none text-[#666]">
        <span className="ml-[-16px] w-[30px] text-[50px] font-medium">2</span>
        <span className="ml-[71px] w-[87px]">看点</span>
        <span className="ml-[70px] w-[86px]">资讯</span>
        <span className="ml-[69px] w-[83px]">盘口</span>
        <span className="ml-[75px] w-[85px]">资金</span>
        <span className="ml-[70px] w-[85px]">社区</span>
        <span className="relative ml-[52px] text-[49px] font-medium text-[#2f2f2f]">简况(F10)</span>
        <div className="absolute right-0 top-0 h-full w-[80px] bg-gradient-to-r from-white/0 to-white/90" />
        <div className="absolute left-[926px] top-[105px] h-[12px] w-[58px] rounded-full bg-[#f4303f]" />
      </div>

      {/* Buttons */}
      <div className="flex h-[135px] shrink-0 items-start gap-[24px] pl-[48px] pt-[35px]">
        <Btn t="操盘必读" />
        <Btn t="大事提醒" />
        <Btn t="财务分析" />
        <Btn t="概念题材" a />
      </div>

      {/* Footer */}
      <div className="relative flex min-h-0 flex-1 items-start bg-[#252525]">
        <div className="flex w-[248px] flex-col items-center pt-[12px]">
          <svg width="28" height="18" viewBox="0 0 28 18"><path d="M14 0l14 18H0z" fill="#b5b5b5" /></svg>
          <div className="mt-[17px] text-[33px] leading-none text-[#787878]">专用设备</div>
          <div className="mt-[27px] text-[34px] leading-none text-[#22dd33]">-1.64%</div>
        </div>
        <FootItem label="下单" icon={
          <svg width="50" height="56" viewBox="0 0 50 56"><path d="M8 2h34a6 6 0 0 1 6 6v30L36 54H8a6 6 0 0 1-6-6V8a6 6 0 0 1 6-6z" fill="none" stroke="#c9c9c9" strokeWidth="3" /><path d="M10 16h30M10 25h30M10 34h26M10 43h20" stroke="#c9c9c9" strokeWidth="3" /></svg>
        } />
        <FootItem label="诊股" icon={
          <svg width="58" height="56" viewBox="0 0 58 56"><path d="M20 3h18" stroke="#c9c9c9" strokeWidth="4" /><rect x="2" y="10" width="54" height="38" rx="7" fill="none" stroke="#c9c9c9" strokeWidth="3" /><path d="M29 20v18M20 29h18" stroke="#c9c9c9" strokeWidth="3" /><path d="M12 48v6M46 48v6" stroke="#c9c9c9" strokeWidth="4" /></svg>
        } />
        <FootItem label="删自选" icon={
          <svg width="48" height="48" viewBox="0 0 48 48"><rect x="2" y="2" width="44" height="44" fill="none" stroke="#c9c9c9" strokeWidth="3" /><path d="M12 24h24" stroke="#c9c9c9" strokeWidth="3" /></svg>
        } />
        <FootItem label="功能" icon={
          <svg width="52" height="54" viewBox="0 0 52 54"><circle cx="26" cy="27" r="24" fill="none" stroke="#c9c9c9" strokeWidth="3" /><path d="M14 20h24M14 34h24" stroke="#c9c9c9" strokeWidth="3" /></svg>
        } />
        <div className="absolute left-[1009px] top-[24px] h-[18px] w-[18px] rounded-full bg-[#e82e36]" />
        <div className="absolute left-[322px] top-[165px] h-[11px] w-[428px] rounded-full bg-[#a8a8a8]" />
      </div>
    </div>
  );
}
